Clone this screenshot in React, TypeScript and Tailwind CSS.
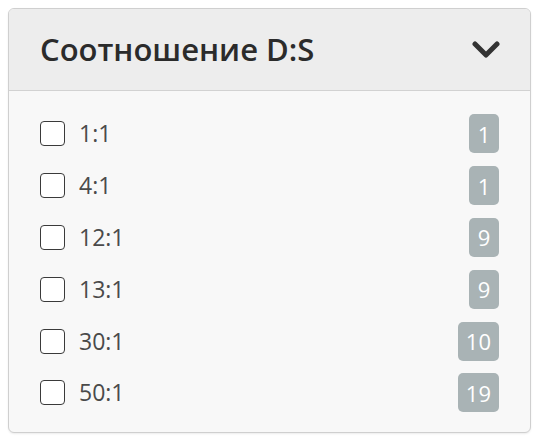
const rows = [
  { label: '1:1', count: 1 },
  { label: '4:1', count: 1 },
  { label: '12:1', count: 9 },
  { label: '13:1', count: 9 },
  { label: '30:1', count: 10 },
  { label: '50:1', count: 19 },
];

function Chevron() {
  return (
    <svg width="28" height="18" viewBox="0 0 28 18" fill="none">
      <path d="M3 3l11 11L25 3" stroke="#333" strokeWidth="5" strokeLinecap="round" strokeLinejoin="round" />
    </svg>
  );
}

export default function App() {
  return (
    <div className="min-h-screen bg-white pl-2 pt-2 font-['Open_Sans',sans-serif]">
      <div className="w-[523px] h-[425px] rounded-[6px] border border-[#cfcfcf] bg-[#f8f8f8] overflow-hidden shadow-[0_1px_2px_rgba(0,0,0,0.08)]">
        {/* header */}
        <div className="flex h-[82px] items-center justify-between border-b border-[#d2d2d2] bg-[#ededed] pl-[31px] pr-[30px]">
          <h2 className="text-[31px] font-semibold text-[#2b2b2b] leading-none">Соотношение D:S</h2>
          <Chevron />
        </div>

        {/* options */}
        <div className="flex flex-col pt-[17px] pl-[31px] pr-[31px]">
          {rows.map((r) => (
            <label key={r.label} className="flex h-[51.8px] items-center">
              <span className="h-[25px] w-[25px] rounded-[4px] border-[1.5px] border-[#3a3a3a] bg-white" />
              <span className="ml-[14px] text-[23px] text-[#4a4a4a] leading-none">{r.label}</span>
              <span className="ml-auto flex h-[39px] min-w-[30px] items-center justify-center rounded-[5px] bg-[#a9b3b5] px-[8px] text-[22px] text-white leading-none">
                {r.count}
              </span>
            </label>
          ))}
        </div>
      </div>
    </div>
  );
}
